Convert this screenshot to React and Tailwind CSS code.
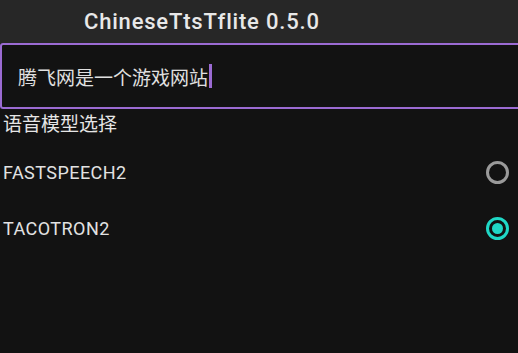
import React, { useState } from 'react';

const models = ['FASTSPEECH2', 'TACOTRON2'];

const Radio = ({ checked }) => (
    <span
        className={`w-[23px] h-[23px] rounded-full border-[3px] flex items-center justify-center ${
            checked ? 'border-[#1fd8c6]' : 'border-[#9a9a9a]'
        }`}
    >
        {checked && <span className="w-[11px] h-[11px] rounded-full bg-[#1fd8c6]" />}
    </span>
);

const App = () => {
    const [model, setModel] = useState('TACOTRON2');

    return (
        <div className="w-[518px] h-[353px] bg-[#121212] overflow-hidden text-[#e6e6e6] font-['Roboto','Noto_Sans_CJK_SC',sans-serif]">
            {/* title bar */}
            <div className="h-[43px] bg-[#272727] flex items-center pl-[84px]">
                <span className="text-[22px] tracking-[0.8px] font-medium text-[#e8e8e8]">ChineseTtsTflite 0.5.0</span>
            </div>

            {/* text input */}
            <div className="h-[66px] border-2 border-r-0 border-[#9b6bd3] rounded-l-[3px] flex items-center pl-[16px]">
                <span className="text-[19px] text-[#e0e0e0] font-['Noto_Sans_CJK_SC',sans-serif] leading-none">腾飞网是一个游戏网站</span>
                <span className="w-[3px] h-[24px] bg-[#9b6bd3] ml-[1px]" />
            </div>

            <div className="pl-[3px] pt-[2px] text-[19px] leading-[24px] font-['Noto_Sans_CJK_SC',sans-serif] text-[#e6e6e6]">
                语音模型选择
            </div>

            <div className="flex flex-col mt-[9px]">
                {models.map((m) => (
                    <button
                        key={m}
                        onClick={() => setModel(m)}
                        className="flex items-center justify-between pl-[3px] pr-[9px] h-[56px] text-left outline-none"
                    >
                        <span className="text-[18px] tracking-wide text-[#e2e2e2]">{m}</span>
                        <Radio checked={model === m} />
                    </button>
                ))}
            </div>
        </div>
    );
};

export default App;
